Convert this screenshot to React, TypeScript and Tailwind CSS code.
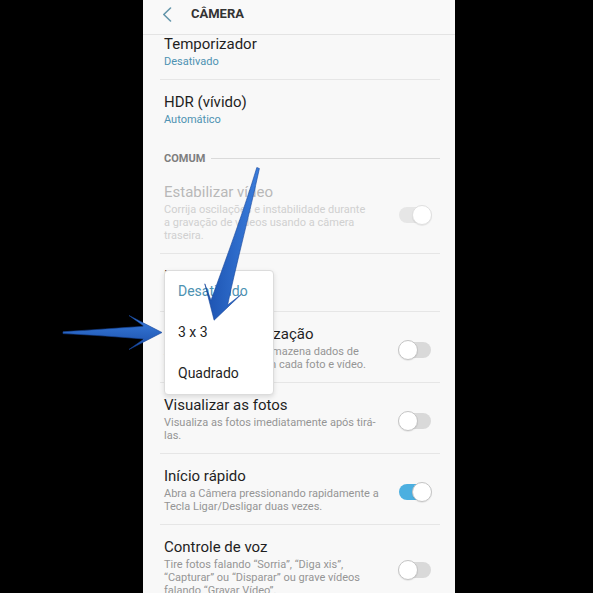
import React from "react";

type Sw = "on" | "off" | "disabled";

function Toggle({ state }: { state: Sw }) {
  const track =
    state === "on" ? "bg-[#4cafe0]" : state === "disabled" ? "bg-[#e6e6e6]" : "bg-[#d9d9d9]";
  const thumbPos = state === "off" ? "left-0" : "right-0";
  const thumbBorder = state === "disabled" ? "border-[#e0e0e0]" : "border-[#c4c4c4]";
  return (
    <div className="relative w-[34px] h-[20px] shrink-0 mt-[4px]">
      <div className={`absolute left-[1px] right-[1px] top-[2px] bottom-[2px] rounded-full ${track}`} />
      <div
        className={`absolute top-0 ${thumbPos} w-[20px] h-[20px] rounded-full bg-white border ${thumbBorder} shadow-[0_1px_1px_rgba(0,0,0,0.08)]`}
      />
    </div>
  );
}

function Row({
  title,
  sub,
  teal,
  sw,
  disabled,
  border = true,
  pt = "pt-[13px]",
}: {
  title: string;
  sub: string[];
  teal?: boolean;
  sw?: Sw;
  disabled?: boolean;
  border?: boolean;
  pt?: string;
}) {
  const titleColor = disabled ? "text-[#b8b8b8]" : "text-[#1f1f1f]";
  const subColor = teal ? "text-[#4d92b2]" : disabled ? "text-[#d0d0d0]" : "text-[#959595]";
  return (
    <div
      className={`flex items-center pl-[4px] pr-[8px] ${pt} pb-[11px] ${
        border ? "border-b border-[#e6e6e6]" : ""
      }`}
    >
      <div className="flex-1 flex flex-col min-w-0">
        <div className={`text-[15px] leading-[18px] whitespace-nowrap ${titleColor}`}>{title}</div>
        <div className={`mt-[2px] text-[11px] leading-[13px] ${subColor}`}>
          {sub.map((l, i) => (
            <div key={i} className="whitespace-nowrap">
              {l}
            </div>
          ))}
        </div>
      </div>
      {sw && <Toggle state={sw} />}
    </div>
  );
}

export default function App() {
  return (
    <div className="relative w-[593px] h-[593px] bg-black overflow-hidden font-[Roboto,sans-serif]">
      <div className="ml-[143px] w-[312px] h-full bg-[#f8f8f8] flex flex-col">
        {/* Header */}
        <div className="h-[35px] shrink-0 border-b border-[#e4e4e4] flex items-start pl-[19px] bg-[#f9f9f9]">
          <svg className="mt-[7px]" width="10" height="15" viewBox="0 0 10 15">
            <polyline
              points="8.5,1 1.8,7.5 8.5,14"
              fill="none"
              stroke="#6496ab"
              strokeWidth="1.6"
              strokeLinecap="round"
              strokeLinejoin="round"
            />
          </svg>
          <div className="ml-[19px] mt-[6px] text-[13px] leading-[16px] font-bold text-[#333]">CÂMERA</div>
        </div>

        <div className="ml-[17px] mr-[15px]">
          <Row title="Temporizador" sub={["Desativado"]} teal pt="pt-0" />
          <Row title="HDR (vívido)" sub={["Automático"]} teal border={false} />

          <div className="flex items-start gap-[6px] pl-[4px] pt-[15px] pb-[4px]">
            <div className="text-[11px] leading-[14px] font-bold text-[#7e7e7e]">COMUM</div>
            <div className="flex-1 h-px bg-[#dadada] mt-[6px]" />
          </div>

          <Row
            title="Estabilizar vídeo"
            sub={[
              "Corrija oscilações e instabilidade durante",
              "a gravação de vídeos usando a câmera",
              "traseira.",
            ]}
            sw="disabled"
            disabled
          />
          <Row title="Linhas de grade" sub={["Desativado"]} teal />
          <Row
            title="Marcas de localização"
            sub={[
              "Ativa a localização. Armazena dados de",
              "de localização GPS em cada foto e vídeo.",
            ]}
            sw="off"
          />
          <Row
            title="Visualizar as fotos"
            sub={["Visualiza as fotos imediatamente após tirá-", "las."]}
            sw="off"
          />
          <Row
            title="Início rápido"
            sub={["Abra a Câmera pressionando rapidamente a", "Tecla Ligar/Desligar duas vezes."]}
            sw="on"
          />
          <Row
            title="Controle de voz"
            sub={[
              "Tire fotos falando “Sorria”, “Diga xis”,",
              "“Capturar” ou “Disparar” ou grave vídeos",
              "falando “Gravar Vídeo”.",
            ]}
            sw="off"
            border={false}
          />
        </div>
      </div>

      {/* Popup menu */}
      <div className="absolute left-[164px] top-[270px] w-[110px] rounded-[4px] bg-white border border-[#dcdcdc] shadow-[0_2px_5px_rgba(0,0,0,0.12)] flex flex-col">
        <div className="h-[41px] flex items-center pl-[13px] text-[14px] text-[#4d92b2]">Desativado</div>
        <div className="h-[41px] flex items-center pl-[13px] text-[14px] text-[#1f1f1f]">3 x 3</div>
        <div className="h-[41px] flex items-center pl-[13px] text-[14px] text-[#1f1f1f]">Quadrado</div>
      </div>

      {/* Arrows overlay */}
      <svg className="absolute left-0 top-0 pointer-events-none" width="593" height="593" viewBox="0 0 593 593">
        <defs>
          <linearGradient id="ga" x1="0" y1="0" x2="0" y2="1">
            <stop offset="0" stopColor="#3b7fe0" />
            <stop offset="1" stopColor="#1a4ea8" />
          </linearGradient>
          <linearGradient id="gb" x1="0" y1="0" x2="1" y2="0">
            <stop offset="0" stopColor="#1c52b0" />
            <stop offset="1" stopColor="#3a7ddc" />
          </linearGradient>
        </defs>
        <path
          d="M63,331.8 C92,329.8 120,328 144,326.2 L129,315.5 L162,332.5 L129,349.5 L144,339 C120,337 92,335 63,333.6 Z"
          fill="url(#ga)"
          stroke="#16449a"
          strokeWidth="0.6"
          strokeLinejoin="round"
        />
        <path
          d="M256.8,167.5 C244,210 225,262 211,300.2 L204.8,283.8 L214.1,320.2 L241.2,294.4 L227.6,305 C236,265 250,212 259.4,168.5 Z"
          fill="url(#gb)"
          stroke="#16449a"
          strokeWidth="0.6"
          strokeLinejoin="round"
        />
      </svg>
    </div>
  );
}
